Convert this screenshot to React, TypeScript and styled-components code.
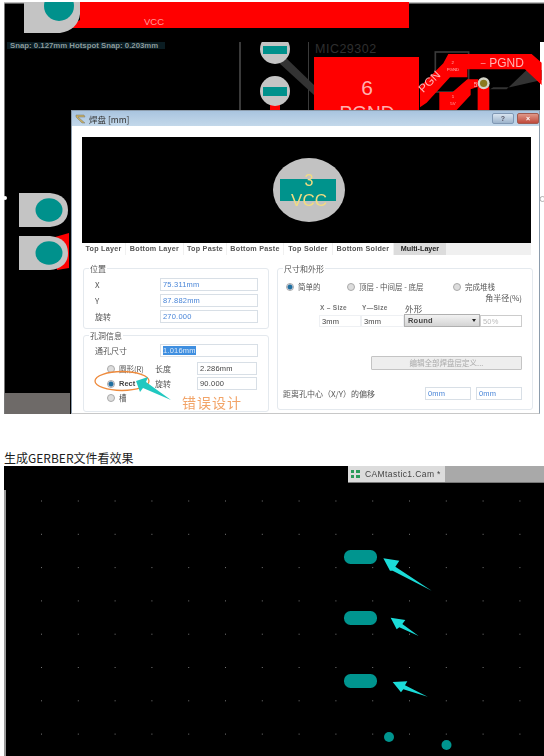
import React from "react";
import styled, { createGlobalStyle } from "styled-components";

const UI = `"Liberation Sans", "Noto Sans CJK SC", sans-serif`;
const CJK = `"Noto Sans CJK SC", "Liberation Sans", sans-serif`;

const Global = createGlobalStyle`
  html, body { margin: 0; padding: 0; background: #fff; }
  #root { width: 544px; height: 756px; overflow: hidden; }
`;

const Page = styled.div`
  width: 544px;
  height: 756px;
  overflow: hidden;
  display: flex;
  flex-direction: column;
  background: #fff;
  padding-top: 2px;
  box-sizing: border-box;
`;

const BoardShot = styled.section`
  position: relative;
  flex: none;
  width: 544px;
  height: 413px;
  overflow: hidden;
`;

const BoardArt = styled.svg`
  position: absolute;
  inset: 0;
  filter: blur(0.45px);
`;

const Dialog = styled.div`
  position: absolute;
  left: 71px;
  top: 108px;
  width: 469px;
  height: 304px;
  box-sizing: border-box;
  background: #fff;
  border: 1px solid #8c9cac;
  border-bottom-color: #c8c8c8;
  display: flex;
  flex-direction: column;
  filter: blur(0.35px);
`;

const TitleBar = styled.div`
  flex: none;
  height: 15px;
  display: flex;
  align-items: center;
  gap: 3px;
  padding: 0 0 0 3px;
  background: linear-gradient(#a9c4df, #c3d8ea);
  font: 8.5px ${CJK};
  color: #333;
`;

const TitleText = styled.span`
  flex: 1;
`;

const WinButton = styled.span<{ $danger?: boolean }>`
  box-sizing: border-box;
  width: 22px;
  height: 11px;
  border-radius: 2px;
  border: 1px solid ${(p) => (p.$danger ? "#a05a50" : "#8098b4")};
  background: ${(p) => (p.$danger ? "linear-gradient(#e09888, #c04a3c)" : "linear-gradient(#d8e4f0, #9db4cc)")};
  color: ${(p) => (p.$danger ? "#fff" : "#556")};
  font: bold 7px/9px ${UI};
  text-align: center;
`;

const DialogBody = styled.div`
  flex: 1;
  min-height: 0;
  padding: 11px 9px 0 10px;
  display: flex;
  flex-direction: column;
`;

const Preview = styled.svg`
  display: block;
  flex: none;
  width: 449px;
  height: 106px;
  background: #000;
`;

const TabStrip = styled.div`
  flex: none;
  display: flex;
  width: 449px;
  height: 12px;
  background: #f0f0f0;
`;

const Tab = styled.div<{ $w: number; $active?: boolean }>`
  width: ${(p) => p.$w}px;
  box-sizing: border-box;
  margin-right: 1px;
  background: ${(p) => (p.$active ? "#dcdcdc" : "#fff")};
  font: bold 7.2px/12px ${UI};
  letter-spacing: ${(p) => (p.$active ? 0 : 0.25)}px;
  color: ${(p) => (p.$active ? "#222" : "#555")};
  text-align: center;
  white-space: nowrap;
`;

const Panels = styled.div`
  position: relative;
  flex: 1;
  display: grid;
  grid-template-columns: 186px 256px;
  column-gap: 8px;
  margin-top: 13px;
  margin-left: 1px;
`;

const LeftColumn = styled.div`
  display: flex;
  flex-direction: column;
  gap: 6px;
`;

const Group = styled.div<{ $h: number }>`
  position: relative;
  box-sizing: border-box;
  height: ${(p) => p.$h}px;
  border: 1px solid #e4e9ee;
  border-radius: 3px;
`;

const Legend = styled.span`
  position: absolute;
  top: -6px;
  left: 5px;
  padding: 0 1px;
  background: #fff;
  font: 8px/11px ${CJK};
  color: #555;
`;

const PositionRows = styled.div`
  display: grid;
  grid-template-columns: 65px 98px;
  row-gap: 3px;
  padding: 9px 0 0 11px;
  align-items: center;
`;

const FieldLabel = styled.span`
  font: 8px/12px ${CJK};
  color: #555;
`;

const Field = styled.div<{ $blue?: boolean; $w?: number }>`
  box-sizing: border-box;
  height: 13px;
  width: ${(p) => (p.$w ? `${p.$w}px` : "auto")};
  border: 1px solid #d8dfe6;
  padding-left: 2px;
  font: 7.5px/11px ${UI};
  letter-spacing: 0.2px;
  color: ${(p) => (p.$blue ? "#4a86d8" : "#444")};
  background: #fff;
`;

const SelectedText = styled.span`
  background: #3f8fe0;
  color: #dbe9fa;
`;

const HoleBody = styled.div`
  padding: 8px 0 0 11px;
`;

const HoleRow = styled.div`
  display: grid;
  grid-template-columns: 65px 98px;
  align-items: center;
  margin-bottom: 5px;
`;

const ShapeRows = styled.div`
  display: grid;
  grid-template-columns: 48px 42px 60px;
  row-gap: 2px;
  align-items: center;
  padding-left: 12px;
`;

const RadioLine = styled.label`
  display: flex;
  align-items: center;
  gap: 4px;
  font: 7.5px/11px ${CJK};
  color: #555;
  white-space: nowrap;
`;

const RectName = styled.span`
  font: bold 7.5px/11px ${UI};
  color: #444;
`;

const Radio = styled.span<{ $on?: boolean }>`
  flex: none;
  width: 8px;
  height: 8px;
  border-radius: 50%;
  box-sizing: border-box;
  border: 1px solid #aaa;
  background: ${(p) => (p.$on ? "radial-gradient(#1f6f9f 0 2px, #dde 3px)" : "#ddd")};
`;

const Annotation = styled.svg`
  position: absolute;
  left: 0;
  top: 0;
  overflow: visible;
  pointer-events: none;
`;

const WrongNote = styled.span`
  position: absolute;
  left: 99px;
  top: 125px;
  font: 14px/18px ${CJK};
  letter-spacing: 1px;
  color: #f2a468;
`;

const RightBody = styled.div`
  padding: 12px 0 0 8px;
  display: flex;
  flex-direction: column;
`;

const ModeRow = styled.div`
  display: grid;
  grid-template-columns: 61px 106px auto;
`;

const CornerLabel = styled.div`
  margin: 1px 10px 0 0;
  text-align: right;
  font: 8px/10px ${CJK};
  color: #555;
`;

const SizeHead = styled.div`
  display: grid;
  grid-template-columns: 42px 43px 76px;
  padding-left: 34px;
  margin-bottom: 2px;
  font: bold 6.5px/10px ${UI};
  letter-spacing: 0.3px;
  color: #777;
`;

const ShapeHead = styled.span`
  font: 8.5px/10px ${CJK};
  color: #555;
`;

const SizeRow = styled.div`
  display: grid;
  grid-template-columns: 42px 43px 76px 42px;
  padding-left: 33px;
`;

const SizeCell = styled.div<{ $boxed?: boolean; $muted?: boolean }>`
  box-sizing: border-box;
  height: 12px;
  padding-left: 2px;
  font: 7.5px/11px ${UI};
  letter-spacing: 0.2px;
  color: ${(p) => (p.$muted ? "#bbb" : "#444")};
  border: 1px solid ${(p) => (p.$boxed ? "#ccc" : "#eef0f3")};
`;

const RoundSelect = styled.div`
  box-sizing: border-box;
  height: 13px;
  margin-top: -1px;
  padding: 0 3px;
  display: flex;
  justify-content: space-between;
  align-items: center;
  border: 1px solid #b0b0b0;
  background: linear-gradient(#f2f2f2, #d4d4d4);
  font: bold 7.5px/11px ${UI};
  letter-spacing: 0.2px;
  color: #444;
`;

const Caret = styled.span`
  width: 0;
  height: 0;
  border-left: 2.5px solid transparent;
  border-right: 2.5px solid transparent;
  border-top: 3px solid #222;
`;

const EditButton = styled.div`
  align-self: flex-start;
  box-sizing: border-box;
  margin: 29px 0 0 85px;
  width: 151px;
  height: 14px;
  border: 1px solid #c4c4c4;
  border-radius: 1px;
  background: #eee;
  font: 7.5px/12px ${CJK};
  color: #aaa;
  text-align: center;
`;

const OffsetRow = styled.div`
  display: flex;
  align-items: center;
  margin: 17px 0 0 -3px;
`;

const OffsetLabel = styled.span`
  width: 142px;
  font: 8px/13px ${CJK};
  color: #555;
  white-space: nowrap;
`;

const OffsetGap = styled.span`
  width: 5px;
`;

const Caption = styled.div`
  flex: none;
  margin-top: 35px;
  padding-left: 4px;
  height: 16px;
  font: 12px/16px ${CJK};
  color: #1d1d1d;
`;

const GerberShot = styled.section`
  position: relative;
  flex: 1;
  margin-left: 4px;
  background: #000;
  overflow: hidden;
`;

const GerberArt = styled.svg`
  position: absolute;
  inset: 0;
`;

const CamTab = styled.div`
  position: absolute;
  left: 344px;
  top: 0;
  right: 0;
  height: 16px;
  display: flex;
  border-bottom: 1px solid #777;
  filter: blur(0.3px);
`;

const CamLabel = styled.div`
  width: 97px;
  display: flex;
  align-items: center;
  gap: 4px;
  padding-left: 2px;
  box-sizing: border-box;
  background: #dcdcdc;
  font: 8.5px/14px ${UI};
  letter-spacing: 0.4px;
  color: #444;
  white-space: nowrap;
`;

const CamRest = styled.div`
  flex: 1;
  background: #a9a9a9;
`;

const tabs: [string, number, boolean?][] = [
  ["Top Layer", 43],
  ["Bottom Layer", 57],
  ["Top Paste", 42],
  ["Bottom Paste", 56],
  ["Top Solder", 48],
  ["Bottom Solder", 60],
  ["Multi-Layer", 52, true],
];

const dotXs = Array.from({ length: 15 }, (_, i) => 37 + i * 36.8);
const dotYs = Array.from({ length: 8 }, (_, i) => 34.5 + i * 33.3);

function BoardDrawing() {
  return (
    <BoardArt width="544" height="413" viewBox="0 2 544 413">
      <rect x="5" y="2" width="539" height="40" fill="#000" />
      <rect x="5" y="42" width="535" height="372" fill="#000" />
      <rect x="4" y="2" width="1" height="412" fill="#777" />
      <circle cx="5" cy="198" r="2" fill="#fff" />
      <rect x="5" y="393" width="65" height="21" fill="#6e6a68" />
      <rect x="4" y="2" width="540" height="1.5" fill="#bbb" />

      <path d="M80 2H409V28H66L80 20Z" fill="#f00" />
      <path d="M24 2H80V14Q78 30 60 33H24Z" fill="#c4c4c4" />
      <circle cx="59" cy="6" r="15" fill="#00918c" />
      <text x="154" y="25" textAnchor="middle" fontFamily="Liberation Sans" fontSize="9.5" fill="#ff9a9a">VCC</text>

      <rect x="239" y="42" width="2" height="70" fill="#3a3a3a" />
      <rect x="308" y="42" width="1" height="70" fill="#3a3a3a" />
      <path d="M284 56L314 85V95L278 62Z" fill="#333" />
      <rect x="270" y="99" width="10" height="12" fill="#f00" />
      <ellipse cx="275" cy="49" rx="15" ry="15" fill="#c4c4c4" />
      <rect x="263" y="46" width="24" height="8" fill="#00918c" />
      <circle cx="275" cy="91" r="15" fill="#c4c4c4" />
      <rect x="263" y="87" width="24" height="9" fill="#00918c" />
      <rect x="5" y="34" width="535" height="8" fill="#000" />

      <rect x="7" y="42" width="158" height="7" fill="#0a1c22" />
      <text x="10" y="48" fontFamily="Liberation Sans" fontWeight="bold" fontSize="7.8" fill="#8a9a9a">Snap: 0.127mm Hotspot Snap: 0.203mm</text>

      <text x="315" y="53" fontFamily="Liberation Sans" fontSize="12.5" letterSpacing="0.5" fill="#2f2f2f">MIC29302</text>

      <rect x="314" y="57" width="105" height="56" fill="#f00" />
      <text x="367" y="95" textAnchor="middle" fontFamily="Liberation Sans" fontSize="21" fill="#ffb0b0">6</text>
      <text x="367" y="119" textAnchor="middle" fontFamily="Liberation Sans" fontSize="19" fill="#ffb0b0">PGND</text>

      <g transform="translate(230,30) scale(.3333)">
        <rect x="616" y="66" width="100" height="120" fill="none" stroke="#3a3a3a" strokeWidth="5" />
        <path d="M780 178H830L890 120H935V150L840 172H790Z" fill="#333" />
        <path d="M570 170L640 100L655 72H905L935 98V165L885 118H712V142H660L590 218L570 232Z" fill="#f00" />
        <path d="M628 186H668L712 148H745V170L722 178V195L680 240H628Z" fill="#f00" />
        <rect x="743" y="170" width="35" height="70" fill="#f00" />
        <circle cx="761" cy="160" r="18" fill="#d4d4c8" />
        <circle cx="761" cy="160" r="11" fill="#8a7a20" />
        <text x="778" y="110" fontFamily="Liberation Sans" fontSize="36" fill="#ffb4b4">PGND</text>
        <text x="752" y="108" fontFamily="Liberation Sans" fontSize="26" fill="#ffb4b4">–</text>
        <text x="668" y="103" textAnchor="middle" fontFamily="Liberation Sans" fontSize="13" fill="#ffb4b4">2</text>
        <text x="669" y="122" textAnchor="middle" fontFamily="Liberation Sans" fontSize="13" fill="#ffb4b4">PGND</text>
        <text x="737" y="170" textAnchor="middle" fontFamily="Liberation Sans" fontSize="20" fill="#ffb4b4">5</text>
        <text x="669" y="205" textAnchor="middle" fontFamily="Liberation Sans" fontSize="13" fill="#ffb4b4">1</text>
        <text x="669" y="226" textAnchor="middle" fontFamily="Liberation Sans" fontSize="13" fill="#ffb4b4">5V</text>
        <text x="580" y="190" transform="rotate(-45 580 190)" fontFamily="Liberation Sans" fontSize="35" fill="#ffb4b4">PGN</text>
      </g>

      <path d="M55 237L69 233V268L57 270Z" fill="#f00" />
      <path d="M19 193H50Q68 195 68 210Q68 225 50 227H19Z" fill="#c4c4c4" />
      <path d="M19 236H50Q68 238 68 253Q68 268 50 270H19Z" fill="#c4c4c4" />
      <ellipse cx="49" cy="210" rx="13.500" ry="11.700" fill="#00918c" />
      <ellipse cx="49" cy="253" rx="13.500" ry="11.700" fill="#00918c" />
      <circle cx="542.5" cy="199" r="2.5" fill="#fff" stroke="#999" strokeWidth="0.8" />
    </BoardArt>
  );
}

export default function App() {
  return (
    <Page>
      <Global />
      <BoardShot>
        <BoardDrawing />
        <Dialog>
          <TitleBar>
            <svg width="11" height="10" viewBox="0 0 11 10">
              <path d="M1 1L9 1L10 3L3 3L10 9L7 9L1 3Z" fill="#c8b060" stroke="#777" strokeWidth="0.5" />
            </svg>
            <TitleText>焊盘 [mm]</TitleText>
            <WinButton>?</WinButton>
            <WinButton $danger>×</WinButton>
          </TitleBar>
          <DialogBody>
            <Preview viewBox="0 0 449 106">
              <ellipse cx="227" cy="53" rx="36" ry="32" fill="#c2c2c2" />
              <rect x="198" y="42" width="56" height="22" fill="#00938c" />
              <text x="227" y="49" textAnchor="middle" fontFamily="Liberation Sans" fontSize="16" fill="#f2dc82">3</text>
              <text x="227" y="69" textAnchor="middle" fontFamily="Liberation Sans" fontSize="17" fill="#f2dc82">VCC</text>
            </Preview>
            <TabStrip>
              {tabs.map(([name, w, active]) => (
                <Tab key={name} $w={w} $active={active}>{name}</Tab>
              ))}
            </TabStrip>
            <Panels>
              <LeftColumn>
                <Group $h={61}>
                  <Legend>位置</Legend>
                  <PositionRows>
                    <FieldLabel>X</FieldLabel>
                    <Field $blue>75.311mm</Field>
                    <FieldLabel>Y</FieldLabel>
                    <Field $blue>87.882mm</Field>
                    <FieldLabel>旋转</FieldLabel>
                    <Field $blue>270.000</Field>
                  </PositionRows>
                </Group>
                <Group $h={77}>
                  <Legend>孔洞信息</Legend>
                  <HoleBody>
                    <HoleRow>
                      <FieldLabel>通孔尺寸</FieldLabel>
                      <Field><SelectedText>1.016mm</SelectedText></Field>
                    </HoleRow>
                    <ShapeRows>
                      <RadioLine><Radio />圆形(R)</RadioLine>
                      <FieldLabel>长度</FieldLabel>
                      <Field $w={60}>2.286mm</Field>
                      <RadioLine><Radio $on /><RectName>Rect</RectName></RadioLine>
                      <FieldLabel>旋转</FieldLabel>
                      <Field $w={60}>90.000</Field>
                      <RadioLine><Radio />槽</RadioLine>
                    </ShapeRows>
                  </HoleBody>
                </Group>
              </LeftColumn>
              <Group $h={142}>
                <Legend>尺寸和外形</Legend>
                <RightBody>
                  <ModeRow>
                    <RadioLine><Radio $on />简单的</RadioLine>
                    <RadioLine><Radio />顶层 - 中间层 - 底层</RadioLine>
                    <RadioLine><Radio />完成堆栈</RadioLine>
                  </ModeRow>
                  <CornerLabel>角半径(%)</CornerLabel>
                  <SizeHead>
                    <span>X – Size</span>
                    <span>Y—Size</span>
                    <ShapeHead>外形</ShapeHead>
                  </SizeHead>
                  <SizeRow>
                    <SizeCell>3mm</SizeCell>
                    <SizeCell>3mm</SizeCell>
                    <RoundSelect>Round<Caret /></RoundSelect>
                    <SizeCell $boxed $muted>50%</SizeCell>
                  </SizeRow>
                  <EditButton>编辑全部焊盘层定义...</EditButton>
                  <OffsetRow>
                    <OffsetLabel>距离孔中心（X/Y）的偏移</OffsetLabel>
                    <Field $blue $w={46}>0mm</Field>
                    <OffsetGap />
                    <Field $blue $w={46}>0mm</Field>
                  </OffsetRow>
                </RightBody>
              </Group>
              <Annotation width="186" height="145" viewBox="0 0 186 145">
                <ellipse cx="39" cy="113" rx="27" ry="9.500" fill="none" stroke="#ee8a3c" strokeWidth="1.3" />
                <path d="M53 113L65 109L63 114L88 132L60 120L57 124Z" fill="#20c8c0" />
              </Annotation>
              <WrongNote>错误设计</WrongNote>
            </Panels>
          </DialogBody>
        </Dialog>
      </BoardShot>
      <Caption>生成GERBER文件看效果</Caption>
      <GerberShot>
        <GerberArt width="540" height="290" viewBox="0 0 540 290">
          <rect x="0" y="24" width="2" height="266" fill="#999" />
          {dotYs.map((y) =>
            dotXs.map((x) => <rect key={`${x}-${y}`} x={x} y={y} width="1" height="1" fill="#777" />)
          )}
          <rect x="340" y="84" width="33" height="14" rx="6.500" fill="#00958f" />
          <rect x="340" y="145" width="33" height="14" rx="6.500" fill="#00958f" />
          <rect x="340" y="208" width="33" height="14" rx="6.500" fill="#00958f" />
          <circle cx="385" cy="271" r="5" fill="#00958f" />
          <circle cx="442.500" cy="279" r="5" fill="#00958f" />
          <g transform="translate(316,74) scale(.3333)" fill="#1bdcd8">
            <path d="M190 55L238 62L226 80L335 152L218 92L210 92Z" />
            <path d="M212 233L256 240L247 252L296 288L238 262L230 268Z" />
            <path d="M218 426L262 424L255 436L323 470L250 448L243 457Z" />
          </g>
        </GerberArt>
        <CamTab>
          <CamLabel>
            <svg width="11" height="10" viewBox="0 0 11 10">
              <path d="M1 1h3v3h-3zM6 1h4v3h-4zM1 6h3v3h-3zM6 6h4v3h-4z" fill="#2a9a5a" />
            </svg>
            CAMtastic1.Cam *
          </CamLabel>
          <CamRest />
        </CamTab>
      </GerberShot>
    </Page>
  );
}
